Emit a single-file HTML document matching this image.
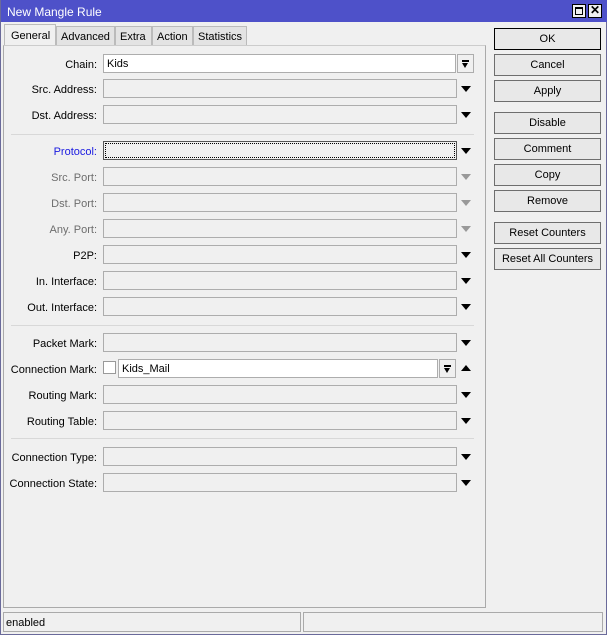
<!DOCTYPE html><html><head><style>
*{box-sizing:border-box;margin:0;padding:0}
body{width:607px;height:635px;background:#f0f0f0;font-family:"Liberation Sans",sans-serif;font-size:11px;color:#000;position:relative;overflow:hidden;border:1px solid #6a6a9a;border-top:none}
.abs{position:absolute}
.title{left:0;top:0;width:607px;height:22px;background:#4e51c9;color:#fff;font-size:12px;padding:5px 0 0 6px}
.tb{top:4px;width:14px;height:14px;background:#f0f0f0;border:1px solid #000}
.tab{top:26px;height:19px;background:#e3e3e3;border:1px solid #bbb;border-bottom:none;padding:4px 4px 0}
.panel{left:2px;top:45px;width:483px;height:563px;border:1px solid #aaa;border-top:1px solid #ccc}
.btn{left:493px;width:107px;height:22px;border:1px solid #6e6e6e;background:#e8e8e8;text-align:center;padding-top:4px}
.lbl{width:96px;text-align:right;left:0;padding-top:2px}
.in{left:102px;width:354px;height:19px;border:1px solid #adadad;background:#f0f0f0;padding:3px 3px}
.arr{left:460px;width:0;height:0;border-left:5px solid transparent;border-right:5px solid transparent;border-top:6px solid #000}
.g{color:#6d6d6d}.ga{border-top-color:#999}
.sep{left:10px;width:463px;height:1px;background:#d8d8d8}
.dd{width:17px;height:19px;border:1px solid #adadad;background:#f0f0f0}
.dd i{position:absolute;left:4px;top:5px;width:7px;height:2px;background:#000}
.dd b{position:absolute;left:4px;top:8px;width:0;height:0;border-left:3.5px solid transparent;border-right:3.5px solid transparent;border-top:5px solid #000}
</style></head><body>
<div class="abs title">New Mangle Rule</div>
<div class="abs tb" style="left:571px"><div style="margin:2px;width:8px;height:8px;border:1px solid #000;border-top-width:2px"></div></div>
<div class="abs tb" style="left:587px;font-size:12px;font-weight:bold;line-height:11px;text-align:center">✕</div>
<div class="abs" style="left:3px;top:24px;width:52px;height:22px;background:#f0f0f0;border:1px solid #bbb;border-bottom:none;padding:5px 6px 0">General</div>
<div class="abs tab" style="left:55px;width:59px">Advanced</div>
<div class="abs tab" style="left:114px;width:37px">Extra</div>
<div class="abs tab" style="left:151px;width:41px">Action</div>
<div class="abs tab" style="left:192px;width:54px">Statistics</div>
<div class="abs panel"></div>
<div class="abs btn" style="top:28px;border-color:#000">OK</div>
<div class="abs btn" style="top:54px">Cancel</div>
<div class="abs btn" style="top:80px">Apply</div>
<div class="abs btn" style="top:112px">Disable</div>
<div class="abs btn" style="top:138px">Comment</div>
<div class="abs btn" style="top:164px">Copy</div>
<div class="abs btn" style="top:190px">Remove</div>
<div class="abs btn" style="top:222px">Reset Counters</div>
<div class="abs btn" style="top:248px">Reset All Counters</div>

<div class="abs lbl" style="top:57px">Chain:</div>
<div class="abs in" style="top:54px;width:353px;background:#fff">Kids</div>
<div class="abs dd" style="left:456px;top:54px"><i></i><b></b></div>

<div class="abs lbl" style="top:82px">Src. Address:</div><div class="abs in" style="top:79px"></div><div class="abs arr" style="top:86px"></div>
<div class="abs lbl" style="top:108px">Dst. Address:</div><div class="abs in" style="top:105px"></div><div class="abs arr" style="top:112px"></div>
<div class="abs sep" style="top:134px"></div>
<div class="abs lbl" style="top:144px;color:#1a1ae0">Protocol:</div><div class="abs in" style="top:141px;border:1px solid #555;outline:1px dotted #000;outline-offset:-3px"></div><div class="abs arr" style="top:148px"></div>
<div class="abs lbl g" style="top:170px">Src. Port:</div><div class="abs in" style="top:167px"></div><div class="abs arr ga" style="top:174px"></div>
<div class="abs lbl g" style="top:196px">Dst. Port:</div><div class="abs in" style="top:193px"></div><div class="abs arr ga" style="top:200px"></div>
<div class="abs lbl g" style="top:222px">Any. Port:</div><div class="abs in" style="top:219px"></div><div class="abs arr ga" style="top:226px"></div>
<div class="abs lbl" style="top:248px">P2P:</div><div class="abs in" style="top:245px"></div><div class="abs arr" style="top:252px"></div>
<div class="abs lbl" style="top:274px">In. Interface:</div><div class="abs in" style="top:271px"></div><div class="abs arr" style="top:278px"></div>
<div class="abs lbl" style="top:300px">Out. Interface:</div><div class="abs in" style="top:297px"></div><div class="abs arr" style="top:304px"></div>
<div class="abs sep" style="top:325px"></div>
<div class="abs lbl" style="top:336px">Packet Mark:</div><div class="abs in" style="top:333px"></div><div class="abs arr" style="top:340px"></div>
<div class="abs lbl" style="top:362px">Connection Mark:</div>
<div class="abs" style="left:102px;top:361px;width:13px;height:13px;border:1px solid #999;background:#fff"></div>
<div class="abs in" style="left:117px;top:359px;width:320px;background:#fff">Kids_Mail</div>
<div class="abs dd" style="left:438px;top:359px"><i></i><b></b></div>
<div class="abs" style="left:460px;top:365px;width:0;height:0;border-left:5px solid transparent;border-right:5px solid transparent;border-bottom:6px solid #000"></div>
<div class="abs lbl" style="top:388px">Routing Mark:</div><div class="abs in" style="top:385px"></div><div class="abs arr" style="top:392px"></div>
<div class="abs lbl" style="top:414px">Routing Table:</div><div class="abs in" style="top:411px"></div><div class="abs arr" style="top:418px"></div>
<div class="abs sep" style="top:438px"></div>
<div class="abs lbl" style="top:450px">Connection Type:</div><div class="abs in" style="top:447px"></div><div class="abs arr" style="top:454px"></div>
<div class="abs lbl" style="top:476px">Connection State:</div><div class="abs in" style="top:473px"></div><div class="abs arr" style="top:480px"></div>

<div class="abs" style="left:2px;top:612px;width:298px;height:20px;border:1px solid #aaa;padding:4px 2px">enabled</div>
<div class="abs" style="left:302px;top:612px;width:300px;height:20px;border:1px solid #aaa"></div>
</body></html>
